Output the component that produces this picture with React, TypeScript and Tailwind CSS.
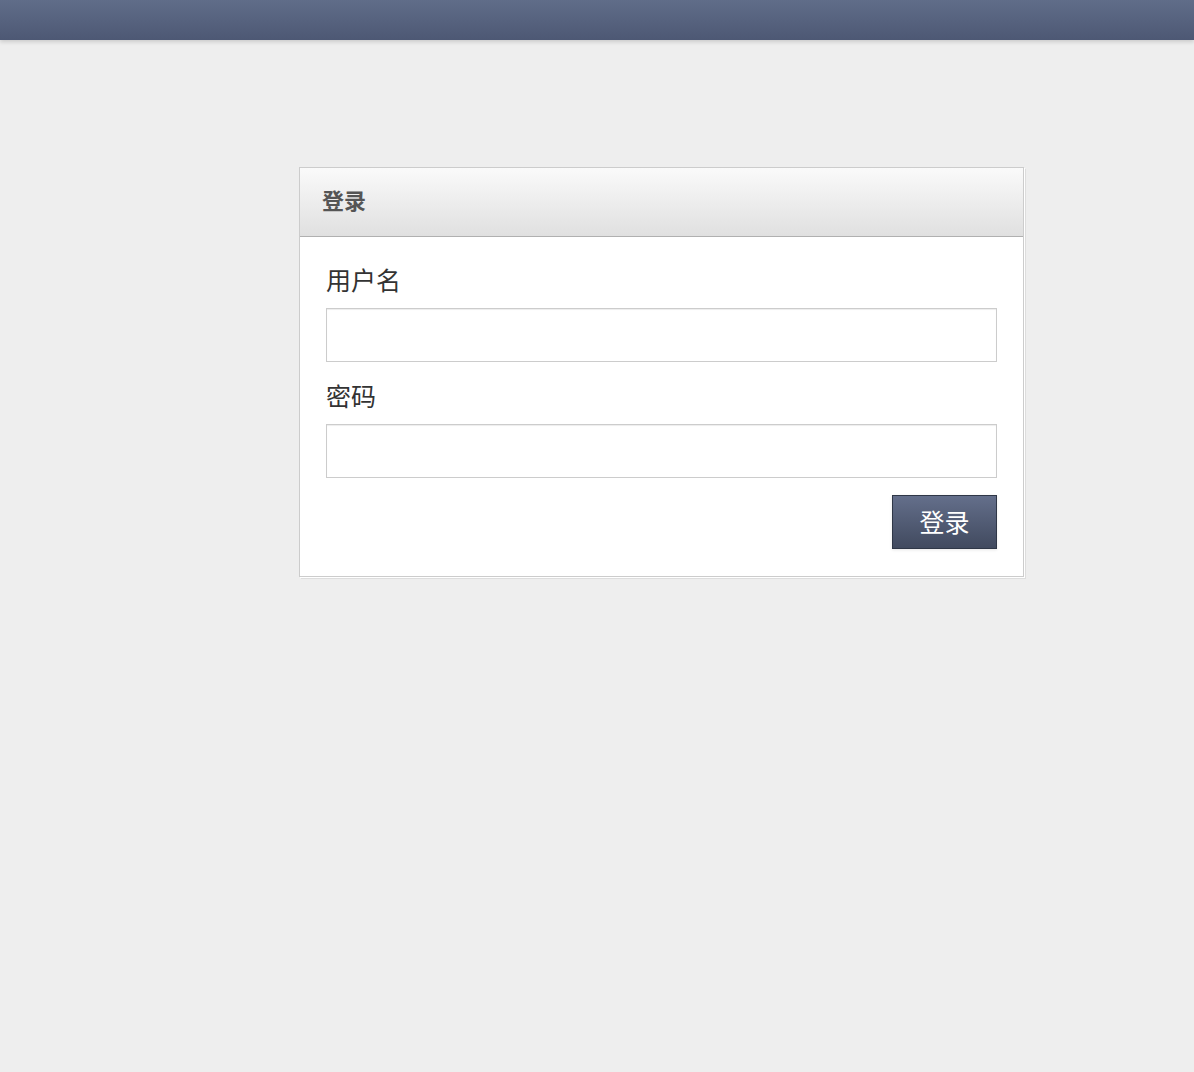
import React from "react";

export default function App() {
  return (
    <div
      className="min-h-[1072px] bg-[#eeeeee]"
      style={{ fontFamily: '"Liberation Sans", "Noto Sans CJK SC", sans-serif' }}
    >
      <div className="h-[40px] bg-gradient-to-b from-[#606d89] to-[#4d5874] shadow-[0_2px_4px_rgba(0,0,0,0.15)]" />
      <div className="pl-[299px] pt-[127px]">
        <div className="w-[725px] border border-[#cccccc] bg-white shadow-[1px_1px_0_#ffffff,2px_2px_0_#dddddd]">
          <div className="flex h-[69px] items-center border-b border-[#b0b0b0] bg-gradient-to-b from-[#fafafa] to-[#e0e0e0] px-[22px] pb-[2px]">
            <span className="text-[22px] font-bold text-[#555555]">登录</span>
          </div>
          <div className="px-[26px] pb-[27px] pt-[27px]">
            <div className="text-[25px] leading-[35px] text-[#333333]">用户名</div>
            <input
              className="mt-[9px] block h-[54px] w-full border border-[#cccccc] bg-white px-3 shadow-[inset_0_1px_1px_rgba(0,0,0,0.075)] outline-none"
              type="text"
            />
            <div className="mt-[18px] text-[25px] leading-[35px] text-[#333333]">密码</div>
            <input
              className="mt-[9px] block h-[54px] w-full border border-[#cccccc] bg-white px-3 shadow-[inset_0_1px_1px_rgba(0,0,0,0.075)] outline-none"
              type="password"
            />
            <div className="mt-[17px] flex justify-end">
              <button className="h-[54px] w-[105px] border border-[#2f3747] bg-gradient-to-b from-[#646f8b] to-[#414a5f] pt-[3px] text-[25px] text-white shadow-[0_1px_3px_rgba(0,0,0,0.1)]">
                登录
              </button>
            </div>
          </div>
        </div>
      </div>
    </div>
  );
}
